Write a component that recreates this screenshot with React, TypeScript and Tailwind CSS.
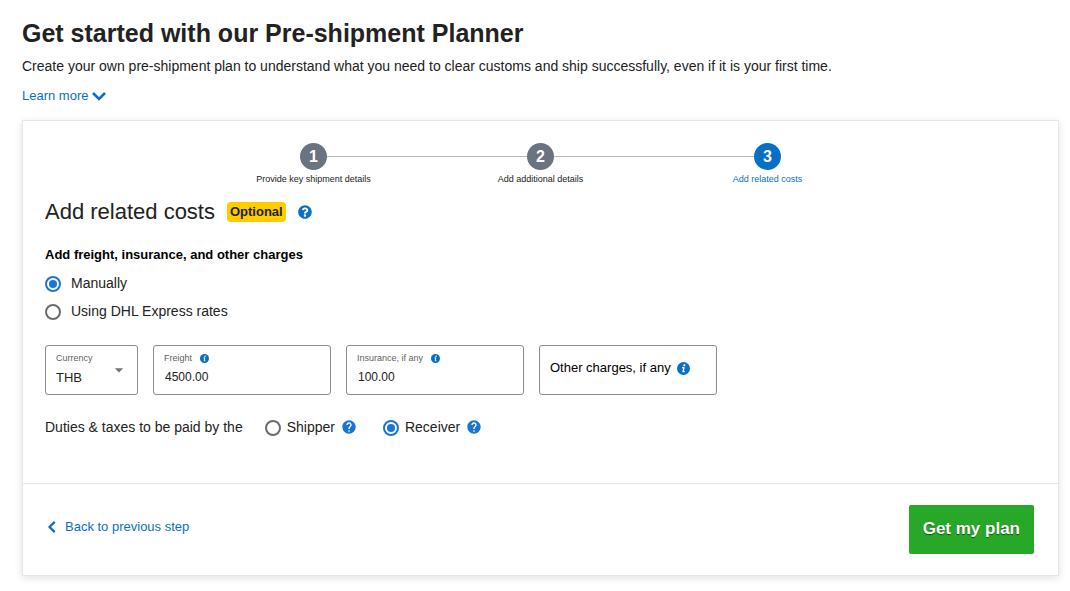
import React, { useState } from 'react';
import { FaQuestionCircle } from 'react-icons/fa';
import { MdArrowDropDown, MdHelp } from 'react-icons/md';
import clsx from 'clsx';

const steps = ['Provide key shipment details', 'Add additional details', 'Add related costs'];
const currentStep = 2;

const InfoIcon = ({ className }: { className?: string }) => (
  <svg viewBox="0 0 14 14" className={className} aria-hidden="true">
    <circle cx="7" cy="7" r="7" fill="#0870c4" />
    <circle cx="7.9" cy="3.5" r="1.2" fill="#fff" />
    <path d="M5.4 6h2.1L6.5 10.4H8.3" fill="none" stroke="#fff" strokeWidth="1.5" strokeLinejoin="round" />
  </svg>
);

const Chevron = ({ className, points }: { className?: string; points: string }) => (
  <svg viewBox="0 0 14 14" className={className} aria-hidden="true">
    <polyline points={points} fill="none" stroke="currentColor" strokeWidth="2.6" />
  </svg>
);

interface RadioProps {
  id: string;
  name: string;
  label: string;
  checked: boolean;
  onChange: () => void;
  className?: string;
}

const Radio = ({ id, name, label, checked, onChange, className }: RadioProps) => (
  <div className={clsx('flex items-center', className)}>
    <input
      type="radio"
      id={id}
      name={name}
      checked={checked}
      onChange={onChange}
      className="mt-0.5 size-4 shrink-0 appearance-none rounded-full border-2 border-[#6b6b6b] bg-clip-content p-0.5 checked:border-[#1976d2] checked:bg-[#1976d2]"
    />
    <label htmlFor={id}>{label}</label>
  </div>
);

interface AmountFieldProps {
  id: string;
  label: string;
  value: string;
  onChange: (value: string) => void;
}

const AmountField = ({ id, label, value, onChange }: AmountFieldProps) => (
  <div className="flex h-[50px] w-[178px] flex-col rounded-[3px] border border-[#8c8c8c] px-2.5 pt-1">
    <label htmlFor={id} className="flex items-center text-[9px] leading-4 text-[#5f5f5f]">
      {label}
      <InfoIcon className="ml-2 size-[9px]" />
    </label>
    <input
      id={id}
      value={value}
      onChange={(e) => onChange(e.target.value)}
      className="h-[22px] w-full pl-px text-xs text-[#222] outline-none"
    />
  </div>
);

const App = () => {
  const [rateSource, setRateSource] = useState('manual');
  const [payer, setPayer] = useState('receiver');
  const [currency, setCurrency] = useState('THB');
  const [freight, setFreight] = useState('4500.00');
  const [insurance, setInsurance] = useState('100.00');
  const [other, setOther] = useState('');

  return (
    <main className="bg-white pt-4 pr-[11px] pb-4 pl-[22px] font-['Liberation_Sans',Arial,sans-serif] text-sm text-[#222]">
      <h1 className="text-[25px] leading-[34px] font-bold">Get started with our Pre-shipment Planner</h1>
      <p className="mt-1.5 leading-5">
        Create your own pre-shipment plan to understand what you need to clear customs and ship successfully, even if it
        is your first time.
      </p>
      <button type="button" className="mt-2.5 flex items-center text-[13px] leading-5 text-[#0870c4]">
        Learn more
        <Chevron className="ml-1 size-3.5" points="1,4 7,10 13,4" />
      </button>

      <section className="mt-3.5 border border-[#e6e6e6] shadow-[0_2px_8px_rgba(0,0,0,0.12)]">
        <div className="px-[22px] pt-[22px] pb-[46px]">
          {/* Stepper */}
          <ol className="mx-auto flex max-w-[681px]">
            {steps.map((step, index) => (
              <li key={step} className="flex flex-1 flex-col items-center">
                <div className="flex w-full items-center">
                  <span className={clsx('h-px flex-1', index > 0 && 'bg-[#b8b8b8]')} />
                  <span
                    className={clsx(
                      'flex size-[27px] items-center justify-center rounded-full text-base font-bold text-white',
                      index === currentStep ? 'bg-[#0870c4]' : 'bg-[#6b7280]'
                    )}
                  >
                    {index + 1}
                  </span>
                  <span className={clsx('h-px flex-1', index < steps.length - 1 && 'bg-[#b8b8b8]')} />
                </div>
                <span
                  className={clsx('mt-[3px] text-[9px] leading-3', index === currentStep ? 'text-[#0870c4]' : 'text-[#222]')}
                >
                  {step}
                </span>
              </li>
            ))}
          </ol>

          <div className="mt-[11px] flex items-center">
            <h2 className="text-[22px] leading-8">Add related costs</h2>
            <span className="ml-3 rounded bg-[#fc0] px-[3px] text-[13px] leading-5 font-bold">Optional</span>
            <button type="button" aria-label="Help" className="ml-3 text-[#0870c4]">
              <FaQuestionCircle className="size-3.5" />
            </button>
          </div>

          <h3 className="mt-[17px] text-[13px] leading-5 font-bold text-black">
            Add freight, insurance, and other charges
          </h3>
          <Radio
            id="manual"
            name="rateSource"
            label="Manually"
            checked={rateSource === 'manual'}
            onChange={() => setRateSource('manual')}
            className="mt-2 gap-2.5"
          />
          <Radio
            id="express"
            name="rateSource"
            label="Using DHL Express rates"
            checked={rateSource === 'express'}
            onChange={() => setRateSource('express')}
            className="mt-2 gap-2.5"
          />

          <div className="mt-6 flex flex-wrap gap-[15px]">
            <div className="relative flex h-[50px] w-[93px] flex-col rounded-[3px] border border-[#8c8c8c] pt-1 pl-2.5">
              <label htmlFor="currency" className="text-[9px] leading-4 text-[#5f5f5f]">
                Currency
              </label>
              <select
                id="currency"
                value={currency}
                onChange={(e) => setCurrency(e.target.value)}
                className="h-6 w-full appearance-none text-[13px] text-[#222] outline-none"
              >
                <option>THB</option>
                <option>USD</option>
                <option>EUR</option>
              </select>
              <MdArrowDropDown className="pointer-events-none absolute top-3.5 right-2 size-5 text-[#757575]" />
            </div>
            <AmountField id="freight" label="Freight" value={freight} onChange={setFreight} />
            <AmountField id="insurance" label="Insurance, if any" value={insurance} onChange={setInsurance} />
            <div className="flex h-[50px] w-[178px] items-center rounded-[3px] border border-[#8c8c8c] px-2.5 pb-1">
              <label htmlFor="other" className="flex shrink-0 items-center text-[13px] text-black">
                Other charges, if any
                <InfoIcon className="ml-1.5 size-[13px]" />
              </label>
              <input
                id="other"
                value={other}
                onChange={(e) => setOther(e.target.value)}
                className="h-6 w-0 flex-1 text-xs outline-none"
              />
            </div>
          </div>

          <div className="mt-[22px] flex flex-wrap items-center">
            <span>Duties &amp; taxes to be paid by the</span>
            <Radio
              id="shipper"
              name="payer"
              label="Shipper"
              checked={payer === 'shipper'}
              onChange={() => setPayer('shipper')}
              className="ml-[22px] gap-1.5"
            />
            <MdHelp className="ml-1.5 size-4 text-[#1976d2]" />
            <Radio
              id="receiver"
              name="payer"
              label="Receiver"
              checked={payer === 'receiver'}
              onChange={() => setPayer('receiver')}
              className="ml-[26px] gap-1.5"
            />
            <MdHelp className="ml-1.5 size-4 text-[#1976d2]" />
          </div>
        </div>

        <div className="flex items-center justify-between border-t border-[#e6e6e6] px-6 py-[21px]">
          <a href="#previous" className="mb-1.5 flex items-center text-[13px] leading-5 text-[#0870c4]">
            <Chevron className="mr-1.5 size-3" points="9,1 3,7 9,13" />
            Back to previous step
          </a>
          <button
            type="button"
            className="h-[49px] rounded-[2px] bg-[#28a828] px-3.5 text-[17px] font-bold text-white text-shadow-[0_1px_1px_rgba(0,0,0,0.5)]"
          >
            Get my plan
          </button>
        </div>
      </section>
    </main>
  );
};

export default App;
